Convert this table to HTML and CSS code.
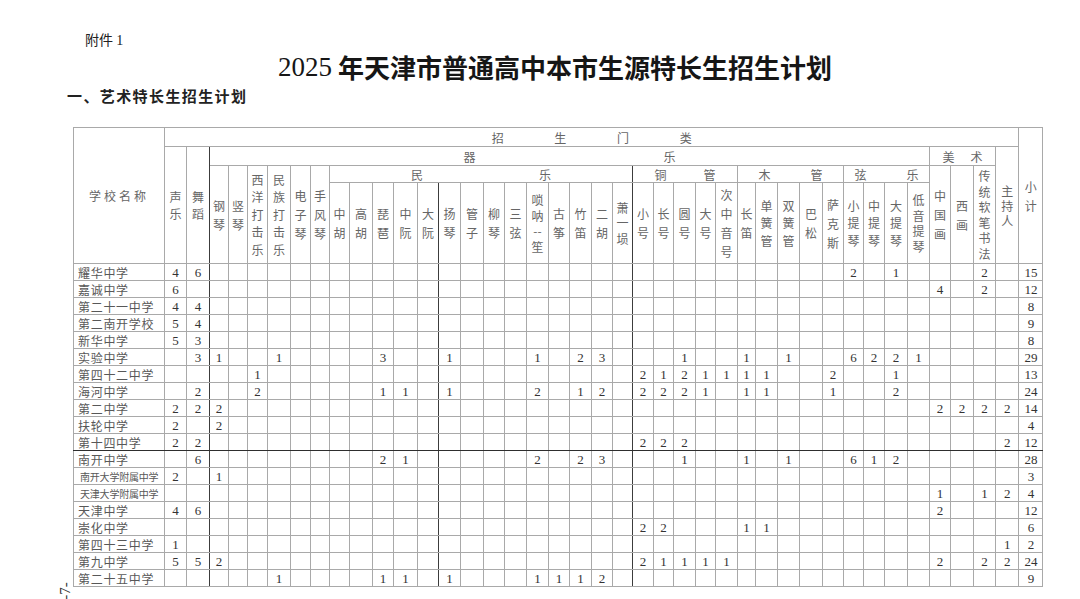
FILE: index.html
```html
<!DOCTYPE html>
<html lang="zh-CN">
<head>
<meta charset="utf-8">
<title>2025年天津市普通高中本市生源特长生招生计划</title>
<link rel="stylesheet" href="styles.css">
</head>
<body>
<div class="page">
  <div class="attach">附件 <span class="num">1</span></div>
  <h1 class="title"><span class="num">2025</span> 年天津市普通高中本市生源特长生招生计划</h1>
  <h2 class="section">一、艺术特长生招生计划</h2>
  <table class="plan">
    <colgroup>
      <col class="w91">
      <col class="w22"><col class="w23"><col class="w19"><col class="w19"><col class="w20"><col class="w23"><col class="w20"><col class="w19">
      <col class="w20"><col class="w23"><col class="w21"><col class="w24"><col class="w21"><col class="w22"><col class="w23"><col class="w21"><col class="w22"><col class="w22"><col class="w21"><col class="w22"><col class="w21"><col class="w20">
      <col class="w21"><col class="w20"><col class="w22"><col class="w20"><col class="w22">
      <col class="w18"><col class="w22"><col class="w22"><col class="w23"><col class="w21">
      <col class="w20"><col class="w21"><col class="w23"><col class="w22">
      <col class="w21"><col class="w23"><col class="w22">
      <col class="w23"><col class="w24">
    </colgroup>
    <thead>
      <tr class="h1">
        <th rowspan="4" class="school">学校名称</th>
        <th colspan="40"><div class="spread s-zs"><span>招</span><span>生</span><span>门</span><span>类</span></div></th>
        <th rowspan="4"><span class="v">小<br>计</span></th>
      </tr>
      <tr class="h2">
        <th rowspan="3"><span class="v m">声<br>乐</span></th>
        <th rowspan="3" class="dark-r"><span class="v m">舞<br>蹈</span></th>
        <th colspan="34"><div class="spread s-ql"><span>器</span><span>乐</span></div></th>
        <th colspan="3"><div class="spread s-ms"><span>美</span><span>术</span></div></th>
        <th rowspan="3"><span class="v s">主<br>持<br>人</span></th>
      </tr>
      <tr class="h3">
        <th rowspan="2"><span class="v">钢<br>琴</span></th>
        <th rowspan="2"><span class="v">竖<br>琴</span></th>
        <th rowspan="2"><span class="v m">西<br>洋<br>打<br>击<br>乐</span></th>
        <th rowspan="2"><span class="v m">民<br>族<br>打<br>击<br>乐</span></th>
        <th rowspan="2"><span class="v">电<br>子<br>琴</span></th>
        <th rowspan="2"><span class="v">手<br>风<br>琴</span></th>
        <th colspan="14" class="dark-r"><div class="spread s-ml"><span>民</span><span>乐</span></div></th>
        <th colspan="5"><div class="spread s-tg"><span>铜</span><span>管</span></div></th>
        <th colspan="5"><div class="spread s-mg"><span>木</span><span>管</span></div></th>
        <th colspan="4"><div class="spread s-xl"><span>弦</span><span>乐</span></div></th>
        <th rowspan="2"><span class="v">中<br>国<br>画</span></th>
        <th rowspan="2"><span class="v">西<br>画</span></th>
        <th rowspan="2"><span class="v t">传<br>统<br>软<br>笔<br>书<br>法</span></th>
      </tr>
      <tr class="h4">
        <th><span class="v">中<br>胡</span></th>
        <th><span class="v">高<br>胡</span></th>
        <th><span class="v">琵<br>琶</span></th>
        <th><span class="v">中<br>阮</span></th>
        <th class="dark-r"><span class="v">大<br>阮</span></th>
        <th><span class="v">扬<br>琴</span></th>
        <th><span class="v">管<br>子</span></th>
        <th><span class="v">柳<br>琴</span></th>
        <th><span class="v">三<br>弦</span></th>
        <th><span class="v t">唢<br>呐<br>--<br>笙</span></th>
        <th><span class="v">古<br>筝</span></th>
        <th><span class="v">竹<br>笛</span></th>
        <th><span class="v">二<br>胡</span></th>
        <th class="dark-r"><span class="v t">萧<br>一<br>埙</span></th>
        <th><span class="v">小<br>号</span></th>
        <th><span class="v">长<br>号</span></th>
        <th><span class="v">圆<br>号</span></th>
        <th><span class="v">大<br>号</span></th>
        <th><span class="v">次<br>中<br>音<br>号</span></th>
        <th><span class="v">长<br>笛</span></th>
        <th><span class="v m">单<br>簧<br>管</span></th>
        <th><span class="v m">双<br>簧<br>管</span></th>
        <th><span class="v">巴<br>松</span></th>
        <th><span class="v">萨<br>克<br>斯</span></th>
        <th><span class="v m">小<br>提<br>琴</span></th>
        <th><span class="v m">中<br>提<br>琴</span></th>
        <th><span class="v m">大<br>提<br>琴</span></th>
        <th><span class="v t">低<br>音<br>提<br>琴</span></th>
      </tr>
    </thead>
    <tbody>
      <tr class="r">
        <td class="name">耀华中学</td>
        <td>4</td><td>6</td><td></td><td></td><td></td><td></td><td></td><td></td><td></td><td></td>
        <td></td><td></td><td></td><td></td><td></td><td></td><td></td><td></td><td></td><td></td>
        <td></td><td></td><td></td><td></td><td></td><td></td><td></td><td></td><td></td><td></td>
        <td></td><td></td><td>2</td><td></td><td>1</td><td></td><td></td><td></td><td>2</td><td></td>
        <td>15</td>
      </tr>
      <tr class="r">
        <td class="name">嘉诚中学</td>
        <td>6</td><td></td><td></td><td></td><td></td><td></td><td></td><td></td><td></td><td></td>
        <td></td><td></td><td></td><td></td><td></td><td></td><td></td><td></td><td></td><td></td>
        <td></td><td></td><td></td><td></td><td></td><td></td><td></td><td></td><td></td><td></td>
        <td></td><td></td><td></td><td></td><td></td><td></td><td>4</td><td></td><td>2</td><td></td>
        <td>12</td>
      </tr>
      <tr class="r">
        <td class="name">第二十一中学</td>
        <td>4</td><td>4</td><td></td><td></td><td></td><td></td><td></td><td></td><td></td><td></td>
        <td></td><td></td><td></td><td></td><td></td><td></td><td></td><td></td><td></td><td></td>
        <td></td><td></td><td></td><td></td><td></td><td></td><td></td><td></td><td></td><td></td>
        <td></td><td></td><td></td><td></td><td></td><td></td><td></td><td></td><td></td><td></td>
        <td>8</td>
      </tr>
      <tr class="r">
        <td class="name">第二南开学校</td>
        <td>5</td><td>4</td><td></td><td></td><td></td><td></td><td></td><td></td><td></td><td></td>
        <td></td><td></td><td></td><td></td><td></td><td></td><td></td><td></td><td></td><td></td>
        <td></td><td></td><td></td><td></td><td></td><td></td><td></td><td></td><td></td><td></td>
        <td></td><td></td><td></td><td></td><td></td><td></td><td></td><td></td><td></td><td></td>
        <td>9</td>
      </tr>
      <tr class="r">
        <td class="name">新华中学</td>
        <td>5</td><td>3</td><td></td><td></td><td></td><td></td><td></td><td></td><td></td><td></td>
        <td></td><td></td><td></td><td></td><td></td><td></td><td></td><td></td><td></td><td></td>
        <td></td><td></td><td></td><td></td><td></td><td></td><td></td><td></td><td></td><td></td>
        <td></td><td></td><td></td><td></td><td></td><td></td><td></td><td></td><td></td><td></td>
        <td>8</td>
      </tr>
      <tr class="r">
        <td class="name">实验中学</td>
        <td></td><td>3</td><td>1</td><td></td><td></td><td>1</td><td></td><td></td><td></td><td></td>
        <td>3</td><td></td><td></td><td>1</td><td></td><td></td><td></td><td>1</td><td></td><td>2</td>
        <td>3</td><td></td><td></td><td></td><td>1</td><td></td><td></td><td>1</td><td></td><td>1</td>
        <td></td><td></td><td>6</td><td>2</td><td>2</td><td>1</td><td></td><td></td><td></td><td></td>
        <td>29</td>
      </tr>
      <tr class="r">
        <td class="name">第四十二中学</td>
        <td></td><td></td><td></td><td></td><td>1</td><td></td><td></td><td></td><td></td><td></td>
        <td></td><td></td><td></td><td></td><td></td><td></td><td></td><td></td><td></td><td></td>
        <td></td><td></td><td>2</td><td>1</td><td>2</td><td>1</td><td>1</td><td>1</td><td>1</td><td></td>
        <td></td><td>2</td><td></td><td></td><td>1</td><td></td><td></td><td></td><td></td><td></td>
        <td>13</td>
      </tr>
      <tr class="r">
        <td class="name">海河中学</td>
        <td></td><td>2</td><td></td><td></td><td>2</td><td></td><td></td><td></td><td></td><td></td>
        <td>1</td><td>1</td><td></td><td>1</td><td></td><td></td><td></td><td>2</td><td></td><td>1</td>
        <td>2</td><td></td><td>2</td><td>2</td><td>2</td><td>1</td><td></td><td>1</td><td>1</td><td></td>
        <td></td><td>1</td><td></td><td></td><td>2</td><td></td><td></td><td></td><td></td><td></td>
        <td>24</td>
      </tr>
      <tr class="r">
        <td class="name">第二中学</td>
        <td>2</td><td>2</td><td>2</td><td></td><td></td><td></td><td></td><td></td><td></td><td></td>
        <td></td><td></td><td></td><td></td><td></td><td></td><td></td><td></td><td></td><td></td>
        <td></td><td></td><td></td><td></td><td></td><td></td><td></td><td></td><td></td><td></td>
        <td></td><td></td><td></td><td></td><td></td><td></td><td>2</td><td>2</td><td>2</td><td>2</td>
        <td>14</td>
      </tr>
      <tr class="r">
        <td class="name">扶轮中学</td>
        <td>2</td><td></td><td>2</td><td></td><td></td><td></td><td></td><td></td><td></td><td></td>
        <td></td><td></td><td></td><td></td><td></td><td></td><td></td><td></td><td></td><td></td>
        <td></td><td></td><td></td><td></td><td></td><td></td><td></td><td></td><td></td><td></td>
        <td></td><td></td><td></td><td></td><td></td><td></td><td></td><td></td><td></td><td></td>
        <td>4</td>
      </tr>
      <tr class="r sep">
        <td class="name">第十四中学</td>
        <td>2</td><td>2</td><td></td><td></td><td></td><td></td><td></td><td></td><td></td><td></td>
        <td></td><td></td><td></td><td></td><td></td><td></td><td></td><td></td><td></td><td></td>
        <td></td><td></td><td>2</td><td>2</td><td>2</td><td></td><td></td><td></td><td></td><td></td>
        <td></td><td></td><td></td><td></td><td></td><td></td><td></td><td></td><td></td><td>2</td>
        <td>12</td>
      </tr>
      <tr class="r">
        <td class="name">南开中学</td>
        <td></td><td>6</td><td></td><td></td><td></td><td></td><td></td><td></td><td></td><td></td>
        <td>2</td><td>1</td><td></td><td></td><td></td><td></td><td></td><td>2</td><td></td><td>2</td>
        <td>3</td><td></td><td></td><td></td><td>1</td><td></td><td></td><td>1</td><td></td><td>1</td>
        <td></td><td></td><td>6</td><td>1</td><td>2</td><td></td><td></td><td></td><td></td><td></td>
        <td>28</td>
      </tr>
      <tr class="r">
        <td class="name long">南开大学附属中学</td>
        <td>2</td><td></td><td>1</td><td></td><td></td><td></td><td></td><td></td><td></td><td></td>
        <td></td><td></td><td></td><td></td><td></td><td></td><td></td><td></td><td></td><td></td>
        <td></td><td></td><td></td><td></td><td></td><td></td><td></td><td></td><td></td><td></td>
        <td></td><td></td><td></td><td></td><td></td><td></td><td></td><td></td><td></td><td></td>
        <td>3</td>
      </tr>
      <tr class="r">
        <td class="name long">天津大学附属中学</td>
        <td></td><td></td><td></td><td></td><td></td><td></td><td></td><td></td><td></td><td></td>
        <td></td><td></td><td></td><td></td><td></td><td></td><td></td><td></td><td></td><td></td>
        <td></td><td></td><td></td><td></td><td></td><td></td><td></td><td></td><td></td><td></td>
        <td></td><td></td><td></td><td></td><td></td><td></td><td>1</td><td></td><td>1</td><td>2</td>
        <td>4</td>
      </tr>
      <tr class="r">
        <td class="name">天津中学</td>
        <td>4</td><td>6</td><td></td><td></td><td></td><td></td><td></td><td></td><td></td><td></td>
        <td></td><td></td><td></td><td></td><td></td><td></td><td></td><td></td><td></td><td></td>
        <td></td><td></td><td></td><td></td><td></td><td></td><td></td><td></td><td></td><td></td>
        <td></td><td></td><td></td><td></td><td></td><td></td><td>2</td><td></td><td></td><td></td>
        <td>12</td>
      </tr>
      <tr class="r">
        <td class="name">崇化中学</td>
        <td></td><td></td><td></td><td></td><td></td><td></td><td></td><td></td><td></td><td></td>
        <td></td><td></td><td></td><td></td><td></td><td></td><td></td><td></td><td></td><td></td>
        <td></td><td></td><td>2</td><td>2</td><td></td><td></td><td></td><td>1</td><td>1</td><td></td>
        <td></td><td></td><td></td><td></td><td></td><td></td><td></td><td></td><td></td><td></td>
        <td>6</td>
      </tr>
      <tr class="r">
        <td class="name">第四十三中学</td>
        <td>1</td><td></td><td></td><td></td><td></td><td></td><td></td><td></td><td></td><td></td>
        <td></td><td></td><td></td><td></td><td></td><td></td><td></td><td></td><td></td><td></td>
        <td></td><td></td><td></td><td></td><td></td><td></td><td></td><td></td><td></td><td></td>
        <td></td><td></td><td></td><td></td><td></td><td></td><td></td><td></td><td></td><td>1</td>
        <td>2</td>
      </tr>
      <tr class="r">
        <td class="name">第九中学</td>
        <td>5</td><td>5</td><td>2</td><td></td><td></td><td></td><td></td><td></td><td></td><td></td>
        <td></td><td></td><td></td><td></td><td></td><td></td><td></td><td></td><td></td><td></td>
        <td></td><td></td><td>2</td><td>1</td><td>1</td><td>1</td><td>1</td><td></td><td></td><td></td>
        <td></td><td></td><td></td><td></td><td></td><td></td><td>2</td><td></td><td>2</td><td>2</td>
        <td>24</td>
      </tr>
      <tr class="r">
        <td class="name">第二十五中学</td>
        <td></td><td></td><td></td><td></td><td></td><td>1</td><td></td><td></td><td></td><td></td>
        <td>1</td><td>1</td><td></td><td>1</td><td></td><td></td><td></td><td>1</td><td>1</td><td>1</td>
        <td>2</td><td></td><td></td><td></td><td></td><td></td><td></td><td></td><td></td><td></td>
        <td></td><td></td><td></td><td></td><td></td><td></td><td></td><td></td><td></td><td></td>
        <td>9</td>
      </tr>
    </tbody>
  </table>
  <div class="pageno">-7-</div>
</div>
</body>
</html>
```
FILE: styles.css
```css
html, body {
  margin: 0;
  padding: 0;
  background: #ffffff;
}

body {
  font-family: "Noto Sans CJK SC", "Liberation Serif", sans-serif;
  color: #222;
}

.page {
  position: relative;
  width: 1080px;
  height: 599px;
  overflow: hidden;
  padding-top: 30px;
  box-sizing: border-box;
}

.num {
  font-family: "Liberation Serif", serif;
}

.attach {
  margin-left: 85px;
  font-size: 14px;
  line-height: 18px;
  color: #222;
}

.title {
  margin: 2px 0 0 30px;
  height: 30px;
  font-size: 26px;
  line-height: 30px;
  font-weight: bold;
  text-align: center;
  color: #161616;
}

.title .num {
  font-size: 27px;
  font-weight: normal;
  line-height: 30px;
  vertical-align: top;
}

.section {
  margin: 4px 0 0 67px;
  font-size: 15px;
  line-height: 20px;
  font-weight: bold;
  letter-spacing: 1.4px;
  color: #222;
}

/* table */
.plan {
  margin: 21px 0 0 73px;
  border-collapse: collapse;
  table-layout: fixed;
  width: 969px;
}

.w18 { width: 18px; }
.w19 { width: 19px; }
.w20 { width: 20px; }
.w21 { width: 21px; }
.w22 { width: 22px; }
.w23 { width: 23px; }
.w24 { width: 24px; }
.w91 { width: 91px; }

.plan th,
.plan td {
  border: 1px solid #a9a9a9;
  padding: 0;
  text-align: center;
  vertical-align: middle;
  overflow: hidden;
}

.plan th {
  font-weight: normal;
  font-size: 12px;
  line-height: 15px;
  color: #666;
}

.h1 { height: 19px; }
.h2 { height: 19px; }
.h3 { height: 17px; }
.h4 { height: 81px; }

.school {
  font-size: 13px;
  letter-spacing: 3px;
  padding-left: 3px;
}

.spread {
  display: flex;
  justify-content: space-between;
  margin: 0 auto;
  line-height: 15px;
}

.s-zs { width: 200px; }
.s-ql { width: 212px; }
.s-ml { width: 140px; }
.s-tg { width: 61px; }
.s-mg { width: 64px; }
.s-xl { width: 64px; }
.s-ms { width: 40px; }

.v {
  display: block;
  line-height: 19px;
}

.v.m { line-height: 17.5px; }
.v.s { line-height: 15px; }
.v.t { line-height: 15.5px; }

.dark-r {
  border-right-color: #3c3c3c !important;
}

/* data rows */
.r { height: 17px; }

.r td {
  font-family: "Liberation Serif", serif;
  font-size: 13px;
  line-height: 15px;
  color: #333;
}

.r td.name {
  font-family: "Noto Sans CJK SC", sans-serif;
  font-size: 12px;
  letter-spacing: 0.7px;
  text-align: left;
  padding-left: 4px;
  white-space: nowrap;
  color: #585858;
}

.r td.name.long {
  font-size: 10px;
  letter-spacing: -0.2px;
  padding-left: 6px;
}

.r td:nth-child(3),
.r td:nth-child(14),
.r td:nth-child(23) {
  border-right-color: #3c3c3c;
}

.sep td {
  border-bottom-color: #2e2e2e;
}

.pageno {
  position: absolute;
  left: 56px;
  top: 583px;
  font-family: "Liberation Serif", serif;
  font-size: 15px;
  line-height: 16px;
  color: #333;
  transform: rotate(-90deg);
}
```
